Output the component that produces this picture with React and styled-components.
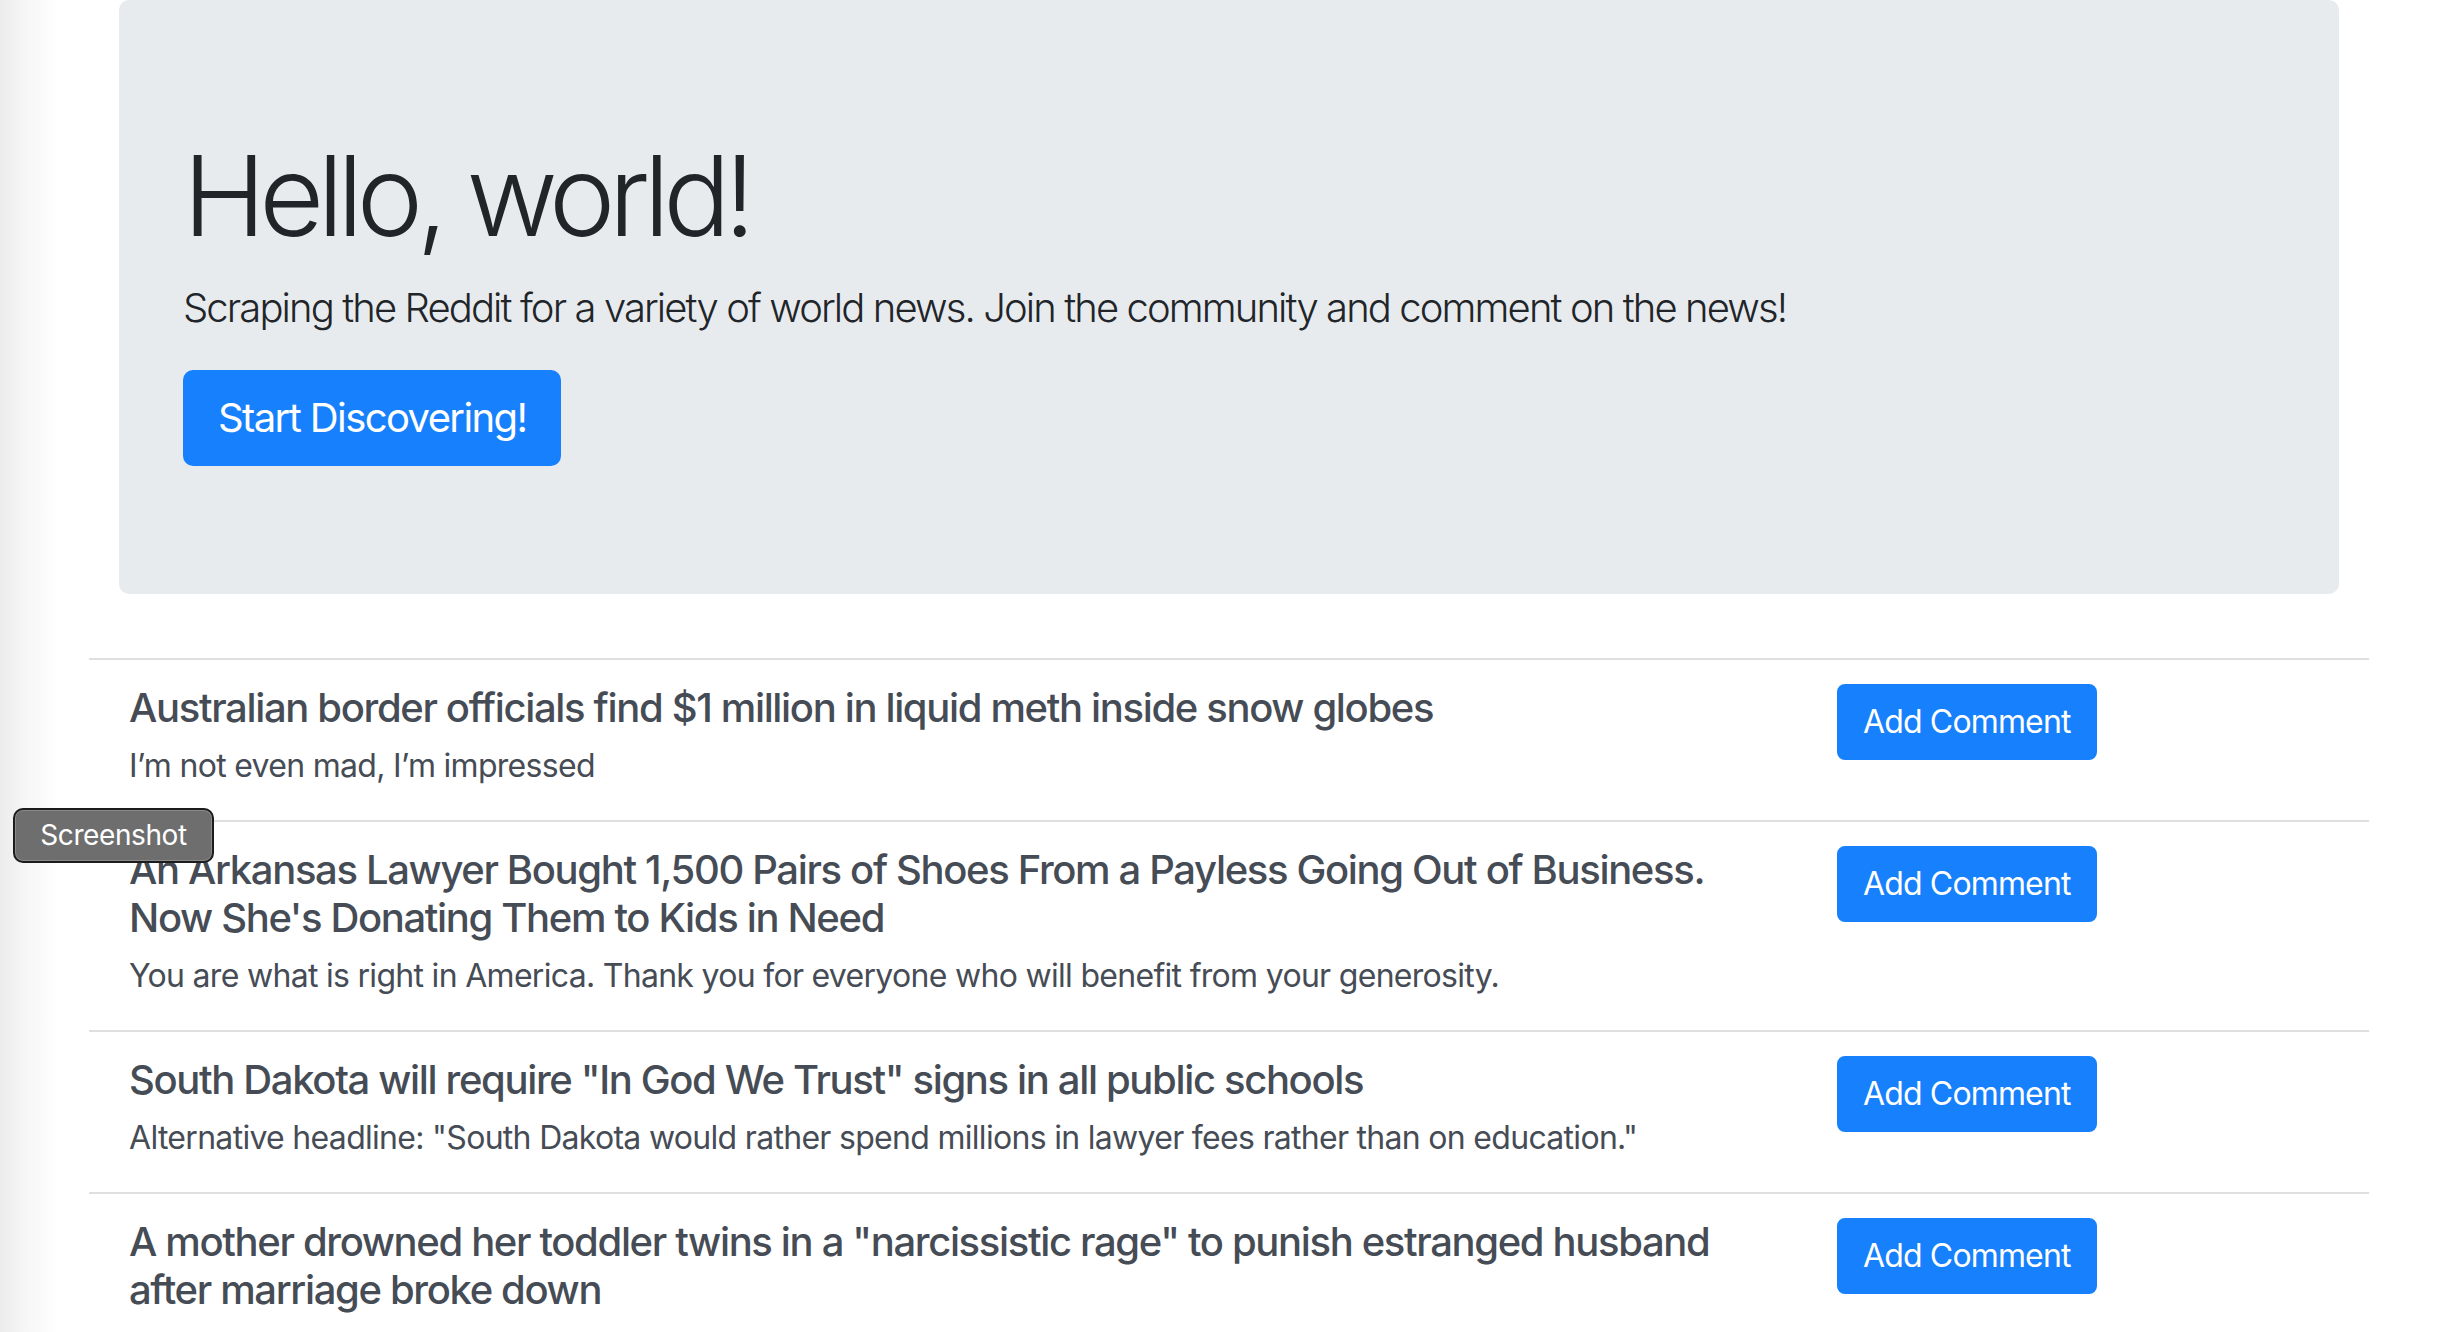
import styled, { createGlobalStyle } from "styled-components";

const GlobalStyle = createGlobalStyle`
  html, body {
    margin: 0;
    padding: 0;
  }
  body {
    font-family: Inter, "Liberation Sans", sans-serif;
    color: #212529;
    background: linear-gradient(to right, #ececec 0px, #f7f7f7 28px, #ffffff 58px, #ffffff 100%);
    min-height: 1332px;
    overflow: hidden;
  }
`;

const Page = styled.div`
  position: relative;
  width: 2458px;
  height: 1332px;
  overflow: hidden;
`;

const Container = styled.div`
  width: 2280px;
  margin: 0 auto;
  box-sizing: border-box;
`;

const Jumbotron = styled.section`
  margin: 0 30px 64px;
  padding: 128px 64px;
  background: #e8ebee;
  border-radius: 10px;
`;

const Display = styled.h1`
  margin: 0 0 16px;
  font-size: 112px;
  font-weight: 300;
  line-height: 1.2;
  letter-spacing: -6.6px;
  color: #212529;
`;

const Lead = styled.p`
  margin: 0 0 32px;
  font-size: 40px;
  font-weight: 300;
  line-height: 1.5;
  letter-spacing: -1.9px;
  color: #212529;
`;

const Button = styled.button`
  display: inline-block;
  box-sizing: border-box;
  border: 2px solid #1780fc;
  background: #1780fc;
  color: #fff;
  font-family: inherit;
  font-weight: 400;
  cursor: pointer;
  font-size: ${(p) => (p.$large ? "40px" : "32px")};
  line-height: 1.5;
  padding: ${(p) => (p.$large ? "16px 33px" : "12px 24px")};
  border-radius: ${(p) => (p.$large ? "10px" : "8px")};
  letter-spacing: ${(p) => (p.$large ? "-1.6px" : "-0.85px")};
`;

const List = styled.ul`
  list-style: none;
  margin: 0;
  padding: 0;
`;

const Item = styled.li`
  display: flex;
  align-items: flex-start;
  gap: 72px;
  padding: 24px 40px;
  border-top: 2px solid #dfdfdf;
`;

const Text = styled.div`
  flex: 0 0 1636px;
  color: #464c55;
`;

const Title = styled.h5`
  margin: 0 0 10px;
  font-size: 40px;
  font-weight: 500;
  line-height: 1.2;
  letter-spacing: -1.35px;
`;

const Note = styled.p`
  margin: 0;
  padding-bottom: 6px;
  font-size: 32px;
  line-height: 1.5;
  letter-spacing: -0.7px;
`;

const Badge = styled.div`
  position: absolute;
  left: 13px;
  top: 808px;
  width: 201px;
  height: 55px;
  box-sizing: border-box;
  border: 2px solid #1c1c1c;
  border-radius: 10px;
  background: #6e6e6e;
  box-shadow: inset 0 0 0 1px #8a8a8a;
  color: #fff;
  font-size: 28px;
  line-height: 51px;
  text-align: center;
  letter-spacing: -0.4px;
`;

const posts = [
  {
    title: "Australian border officials find $1 million in liquid meth inside snow globes",
    note: "I’m not even mad, I’m impressed",
  },
  {
    title:
      "An Arkansas Lawyer Bought 1,500 Pairs of Shoes From a Payless Going Out of Business. Now She's Donating Them to Kids in Need",
    note: "You are what is right in America. Thank you for everyone who will benefit from your generosity.",
  },
  {
    title: 'South Dakota will require "In God We Trust" signs in all public schools',
    note: 'Alternative headline: "South Dakota would rather spend millions in lawyer fees rather than on education."',
  },
  {
    title:
      'A mother drowned her toddler twins in a "narcissistic rage" to punish estranged husband after marriage broke down',
    note: "",
  },
];

export default function App() {
  return (
    <Page>
      <GlobalStyle />
      <Container>
        <Jumbotron>
          <Display>Hello, world!</Display>
          <Lead>
            Scraping the Reddit for a variety of world news. Join the community and comment on the news!
          </Lead>
          <Button $large>Start Discovering!</Button>
        </Jumbotron>
        <List>
          {posts.map((post, i) => (
            <Item key={i}>
              <Text>
                <Title>{post.title}</Title>
                {post.note && <Note>{post.note}</Note>}
              </Text>
              <Button>Add Comment</Button>
            </Item>
          ))}
        </List>
      </Container>
      <Badge>Screenshot</Badge>
    </Page>
  );
}
